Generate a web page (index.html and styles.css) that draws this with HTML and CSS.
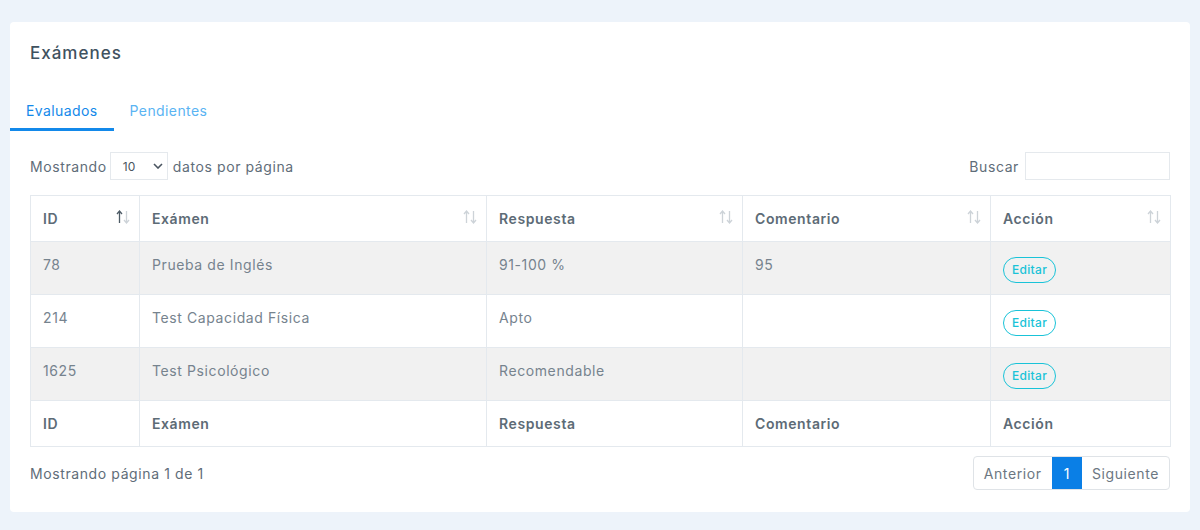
FILE: index.html
```html
<!DOCTYPE html>
<html lang="es">
<head>
<meta charset="utf-8">
<title>Exámenes</title>
<link rel="stylesheet" href="styles.css">
</head>
<body>
<div class="card">
  <div class="card-header"><h4 class="title">Exámenes</h4></div>
  <ul class="tabs">
    <li class="tab active">Evaluados</li>
    <li class="tab">Pendientes</li>
  </ul>
  <div class="content">
    <div class="controls">
      <label class="length">Mostrando
        <span class="select"><span class="select-val">10</span>
          <svg class="chev" width="10" height="6" viewBox="0 0 10 6"><path d="M1 1l4 4 4-4" fill="none" stroke="#4a5560" stroke-width="1.6"/></svg>
        </span>
        datos por página</label>
      <label class="search">Buscar <span class="input"></span></label>
    </div>
    <table class="table">
      <colgroup>
        <col class="c1"><col class="c2"><col class="c3"><col class="c4"><col class="c5">
      </colgroup>
      <thead>
        <tr>
          <th>ID<svg class="sort" width="14" height="14" viewBox="0 0 14 14"><path d="M3.5 13V1.5M1 4l2.5-3L6 4" fill="none" stroke="#4e5b66" stroke-width="1.3"/><path d="M10.5 1v11.5M8 10l2.5 3L13 10" fill="none" stroke="#cdd3d8" stroke-width="1.3"/></svg></th>
          <th>Exámen<svg class="sort" width="14" height="14" viewBox="0 0 14 14"><path d="M3.5 13V1.5M1 4l2.5-3L6 4" fill="none" stroke="#cdd3d8" stroke-width="1.3"/><path d="M10.5 1v11.5M8 10l2.5 3L13 10" fill="none" stroke="#cdd3d8" stroke-width="1.3"/></svg></th>
          <th>Respuesta<svg class="sort" width="14" height="14" viewBox="0 0 14 14"><path d="M3.5 13V1.5M1 4l2.5-3L6 4" fill="none" stroke="#cdd3d8" stroke-width="1.3"/><path d="M10.5 1v11.5M8 10l2.5 3L13 10" fill="none" stroke="#cdd3d8" stroke-width="1.3"/></svg></th>
          <th>Comentario<svg class="sort" width="14" height="14" viewBox="0 0 14 14"><path d="M3.5 13V1.5M1 4l2.5-3L6 4" fill="none" stroke="#cdd3d8" stroke-width="1.3"/><path d="M10.5 1v11.5M8 10l2.5 3L13 10" fill="none" stroke="#cdd3d8" stroke-width="1.3"/></svg></th>
          <th>Acción<svg class="sort" width="14" height="14" viewBox="0 0 14 14"><path d="M3.5 13V1.5M1 4l2.5-3L6 4" fill="none" stroke="#cdd3d8" stroke-width="1.3"/><path d="M10.5 1v11.5M8 10l2.5 3L13 10" fill="none" stroke="#cdd3d8" stroke-width="1.3"/></svg></th>
        </tr>
      </thead>
      <tbody>
        <tr class="odd"><td>78</td><td>Prueba de Inglés</td><td>91-100 %</td><td>95</td><td><span class="btn">Editar</span></td></tr>
        <tr><td>214</td><td>Test Capacidad Física</td><td>Apto</td><td></td><td><span class="btn">Editar</span></td></tr>
        <tr class="odd"><td>1625</td><td>Test Psicológico</td><td>Recomendable</td><td></td><td><span class="btn">Editar</span></td></tr>
      </tbody>
      <tfoot>
        <tr><th>ID</th><th>Exámen</th><th>Respuesta</th><th>Comentario</th><th>Acción</th></tr>
      </tfoot>
    </table>
    <div class="bottom">
      <div class="info">Mostrando página 1 de 1</div>
      <div class="pager">
        <span class="pg">Anterior</span>
        <span class="pg current">1</span>
        <span class="pg">Siguiente</span>
      </div>
    </div>
  </div>
</div>
</body>
</html>
```
FILE: styles.css
```css
* { box-sizing: border-box; }
html, body { margin: 0; padding: 0; }
body {
  background: #edf3fa;
  font-family: Inter, "Open Sans", sans-serif;
  color: #6e7b86;
  font-size: 14px;
  letter-spacing: 0.6px;
}
.card {
  margin: 22px 10px 0;
  height: 490px;
  background: #fff;
  border-radius: 4px;
}
.card-header { padding: 21px 20px 0; }
.title {
  margin: 0;
  font-size: 17px;
  line-height: 20px;
  font-weight: 500;
  letter-spacing: 1px;
  color: #3f5260;
}
.tabs {
  list-style: none;
  margin: 28px 0 0;
  padding: 0;
  display: flex;
}
.tab {
  padding: 11px 16px 8px;
  line-height: 18px;
  font-size: 14px;
  letter-spacing: 0.4px;
  color: #5ab4f3;
  border-bottom: 3px solid transparent;
}
.tab.active {
  color: #1389ea;
  border-bottom-color: #1389ea;
}
.content { padding: 21px 20px 0; }
.controls {
  display: flex;
  justify-content: space-between;
  align-items: center;
  height: 28px;
  color: #5f6d79;
}
.length, .search { display: flex; align-items: center; }
.select {
  display: inline-flex;
  align-items: center;
  justify-content: space-between;
  width: 58px;
  height: 28px;
  margin: 0 5px 0 3px;
  padding: 0 4px 0 12px;
  border: 1px solid #e5e9ed;
  font-size: 12px;
  letter-spacing: 0;
  color: #4a5560;
}
.input {
  display: inline-block;
  width: 145px;
  height: 28px;
  margin-left: 6px;
  border: 1px solid #e5e9ed;
}
.table {
  margin-top: 15px;
  width: 100%;
  border-collapse: collapse;
  table-layout: fixed;
}
.c1 { width: 109px; }
.c2 { width: 347px; }
.c3 { width: 256px; }
.c4 { width: 248px; }
.c5 { width: 180px; }
.table th, .table td {
  border: 1px solid #e4e9ee;
  padding: 0 12px;
  text-align: left;
}
.table th {
  height: 46px;
  font-weight: 600;
  color: #5d6b76;
}
.table thead th { position: relative; }
.table td { height: 53px; vertical-align: top; padding-top: 14px; color: #76838e; }
.table tr.odd td { background: #f1f1f1; }
.sort {
  position: absolute;
  right: 9px;
  top: 14px;
}
.btn {
  display: inline-block;
  margin-top: 1px;
  height: 26px;
  line-height: 24px;
  padding: 0 8px;
  border: 1px solid #19c3d8;
  border-radius: 13px;
  color: #19c3d8;
  font-size: 12px;
  font-weight: 500;
  letter-spacing: 0.3px;
}
.bottom {
  display: flex;
  justify-content: space-between;
  align-items: center;
  margin-top: 9px;
}
.info { color: #5f6d79; }
.pager {
  display: flex;
  border: 1px solid #dfe3e7;
  border-radius: 4px;
  overflow: hidden;
  height: 34px;
}
.pg {
  display: flex;
  align-items: center;
  padding: 0 10px;
  color: #6c7782;
}
.pg.current {
  background: #0a7fe6;
  color: #fff;
  padding: 0 12px;
}
```
